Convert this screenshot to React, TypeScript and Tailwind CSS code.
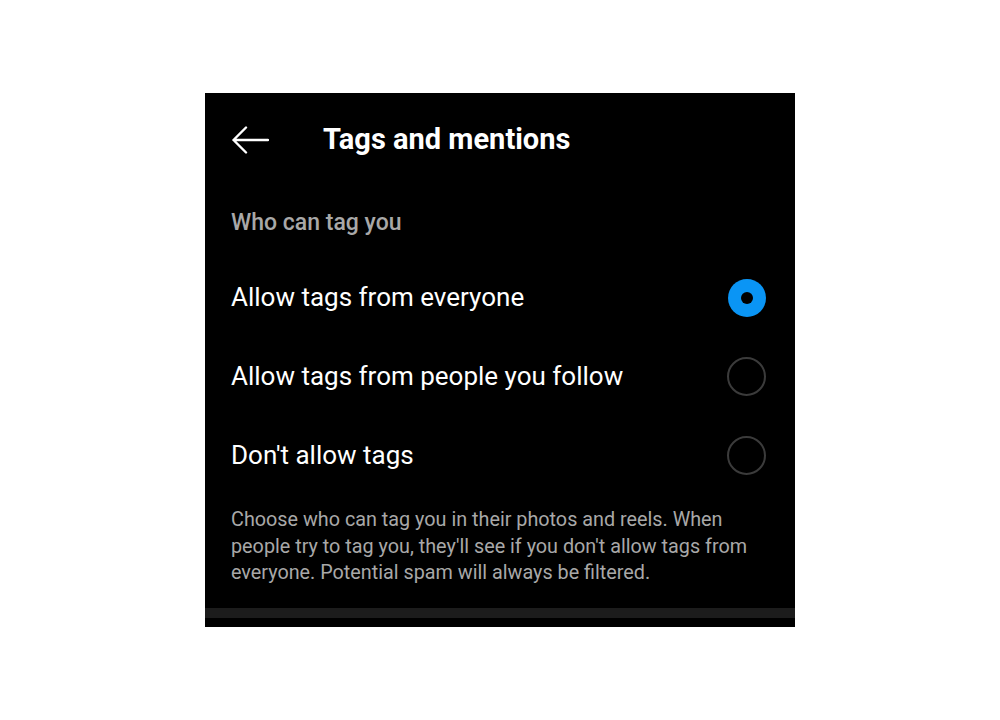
const options = [
  { label: "Allow tags from everyone", checked: true },
  { label: "Allow tags from people you follow", checked: false },
  { label: "Don't allow tags", checked: false },
];

function BackArrow() {
  return (
    <svg width="37" height="28" viewBox="0 0 37 28" fill="none" className="shrink-0">
      <path
        d="M14 1.5 1.5 14 14 26.5M1.5 14H36"
        stroke="white"
        strokeWidth="2.4"
        strokeLinecap="round"
        strokeLinejoin="round"
      />
    </svg>
  );
}

function Radio({ checked }: { checked: boolean }) {
  if (checked) {
    return (
      <span className="flex h-[38px] w-[38px] shrink-0 items-center justify-center rounded-full bg-[#0a95f5]">
        <span className="h-[12px] w-[12px] rounded-full bg-black" />
      </span>
    );
  }
  return <span className="block h-[39px] w-[39px] shrink-0 rounded-full border-[2.5px] border-[#3b3b3b]" />;
}

export default function App() {
  return (
    <div className="flex min-h-[720px] w-full items-start justify-center bg-white pt-[93px] font-['Roboto',sans-serif]">
      <div className="flex w-[590px] flex-col bg-black">
        {/* Header */}
        <div className="flex h-[93px] items-center pl-[27px]">
          <BackArrow />
          <h1 className="ml-[54px] text-[29px] font-bold text-white">Tags and mentions</h1>
        </div>

        <div className="px-[26px]">
          <p className="mt-[21px] text-[23px] font-medium leading-[32px] text-[#a8a8a8]">
            Who can tag you
          </p>

          <div className="mt-[19px] flex flex-col">
            {options.map((o) => (
              <div key={o.label} className="flex h-[79px] items-center justify-between">
                <span className="text-[26px] text-white">{o.label}</span>
                <span className="mr-[3px] flex">
                  <Radio checked={o.checked} />
                </span>
              </div>
            ))}
          </div>

          <p className="mt-[12px] pr-[16px] text-[19.8px] leading-[26.5px] text-[#a8a8a8]">
            Choose who can tag you in their photos and reels. When people try to tag you,
            they'll see if you don't allow tags from everyone. Potential spam will always be
            filtered.
          </p>
        </div>

        <div className="mt-[21px] h-[10px] bg-[#1c1c1c]" />
        <div className="h-[9px]" />
      </div>
    </div>
  );
}
